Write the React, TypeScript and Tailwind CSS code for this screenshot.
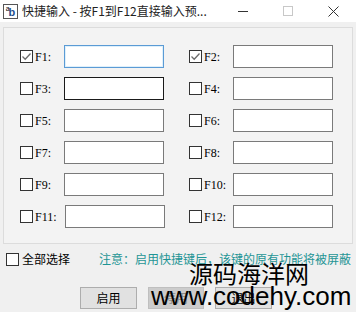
const cjk = "font-['Microsoft_YaHei','Noto_Sans_CJK_SC',sans-serif]";

const keys = [
  ["F1", true, "F2", true],
  ["F3", false, "F4", false],
  ["F5", false, "F6", false],
  ["F7", false, "F8", false],
  ["F9", false, "F10", false],
  ["F11", false, "F12", false],
] as const;

function Check({ on }: { on: boolean }) {
  return (
    <span className="w-[13px] h-[13px] shrink-0 border border-[#333333] bg-white flex items-center justify-center">
      {on && (
        <svg width="11" height="11" viewBox="0 0 11 11">
          <path d="M1.5 5.5 L4.2 8.2 L9.5 2.5" fill="none" stroke="#6b6b6b" strokeWidth="1.3" />
        </svg>
      )}
    </span>
  );
}

function KeyRow({ name, on, focus, hover }: { name: string; on: boolean; focus?: boolean; hover?: boolean }) {
  let box = "border-[#7a7a7a]";
  if (focus) box = "border-[#5b9bd5] shadow-[inset_0_0_0_1px_#dff0fb]";
  if (hover) box = "border-[#1a1a1a]";
  return (
    <div className="flex items-center h-[23px]">
      <Check on={on} />
      <span className={`ml-[2px] text-[12px] text-black font-['Liberation_Serif',serif] ${name === "F11" ? "w-[30px]" : "w-[29px]"}`}>
        {name}:
      </span>
      <div className={`h-[23px] w-[100px] bg-white border ${box}`} />
    </div>
  );
}

export default function App() {
  return (
    <div className={`relative w-[356px] h-[312px] overflow-hidden bg-[#f0f0f0] ${cjk}`}>
      {/* title bar */}
      <div className="h-[22px] bg-white flex items-center">
        <div className="ml-[3px] w-[15px] h-[15px] border border-[#555] bg-white flex items-end justify-center leading-none">
          <span className="text-[7px] self-start -mr-[1px] font-['Liberation_Sans',sans-serif]">a</span>
          <span className="text-[11px] font-bold text-[#1f4e8c] font-['Liberation_Sans',sans-serif]">b</span>
        </div>
        <span className="ml-[4px] text-[12px] text-[#222]">快捷输入 - 按F1到F12直接输入预...</span>
        <div className="ml-auto flex items-center h-full">
          <div className="w-[10px] h-[1px] bg-[#333] mr-[35px]" />
          <div className="w-[10px] h-[10px] border border-[#c8c8c8] mr-[35px]" />
          <svg width="11" height="11" viewBox="0 0 11 11" className="mr-[17px]">
            <path d="M0.5 0.5 L10.5 10.5 M10.5 0.5 L0.5 10.5" stroke="#333" strokeWidth="1" />
          </svg>
        </div>
      </div>

      {/* group box */}
      <div className="mt-[5px] mx-[3px] h-[217px] border border-[#dcdcdc] bg-[#f3f3f3] pt-[17px] pl-[16px]">
        <div className="grid grid-cols-[169px_150px] gap-y-[9px]">
          {keys.map(([a, aOn, b, bOn]) => (
            <>
              <KeyRow key={a} name={a} on={aOn} focus={a === "F1"} hover={a === "F3"} />
              <KeyRow key={b} name={b} on={bOn} />
            </>
          ))}
        </div>
      </div>

      {/* select all + note */}
      <div className="flex items-center mt-[8px] ml-[6px] h-[14px]">
        <Check on={false} />
        <span className="ml-[3px] text-[12px] text-black">全部选择</span>
        <span className="ml-[29px] text-[12px] text-[#1f9595]">注意：启用快捷键后，该键的原有功能将被屏蔽</span>
      </div>

      {/* buttons */}
      <div className="flex gap-[11px] ml-[80px] mt-[21px]">
        <button className="w-[57px] h-[22px] border border-[#adadad] bg-[#e1e1e1] text-[12px] text-black">启用</button>
        <button className="w-[56px] h-[22px] border border-[#bfbfbf] bg-[#cccccc] text-[12px] text-[#8a8a8a]">停用</button>
        <button className="w-[57px] h-[22px] border border-[#adadad] bg-[#e1e1e1] text-[12px] text-black">退出</button>
      </div>

      {/* watermark */}
      <div className="absolute left-[189px] top-[261px] text-[24px] leading-none text-black font-['Noto_Sans_CJK_SC',sans-serif]">
        源码海洋网
      </div>
      <div className="absolute left-[151px] top-[283px] text-[26px] leading-none text-black font-['Liberation_Sans',sans-serif]">
        www.codehy.com
      </div>
    </div>
  );
}
